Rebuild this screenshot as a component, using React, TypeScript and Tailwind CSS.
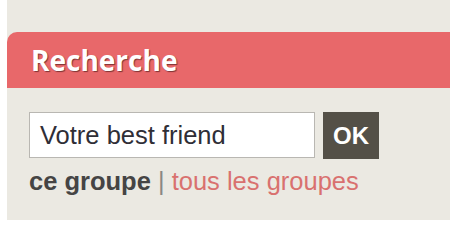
export default function App() {
  return (
    <div className="w-[450px] h-[230px] bg-white overflow-hidden" style={{ fontFamily: '"Liberation Sans", Arial, sans-serif' }}>
      <div className="ml-[7px] h-[220px] bg-[#ebe9e2] pt-[32px]">
        <div className="h-[56px] bg-[#e8686a] rounded-tl-[10px] flex items-center pl-[24px]">
          <span
            className="text-white font-bold text-[28px] leading-none"
            style={{ fontFamily: '"Open Sans", sans-serif', textShadow: '1px 1px 1px rgba(80,30,30,0.7)' }}
          >
            Recherche
          </span>
        </div>
        <div className="px-[22px] pt-[24px]">
          <div className="flex items-stretch gap-[8px]">
            <div className="w-[286px] h-[46px] bg-white border border-[#b9b7b2] flex items-center pl-[10px] text-[25.5px] text-[#2f2e36]">
              Votre best friend
            </div>
            <div className="w-[56px] h-[47px] bg-[#545047] flex items-center justify-center text-white font-bold text-[24px]">
              OK
            </div>
          </div>
          <div className="mt-[5px] text-[25.5px] leading-[34px]">
            <span className="font-bold text-[#454444]">ce groupe</span>
            <span className="text-[#8a8784]"> | </span>
            <span className="text-[#d9716f]">tous les groupes</span>
          </div>
        </div>
      </div>
    </div>
  );
}
